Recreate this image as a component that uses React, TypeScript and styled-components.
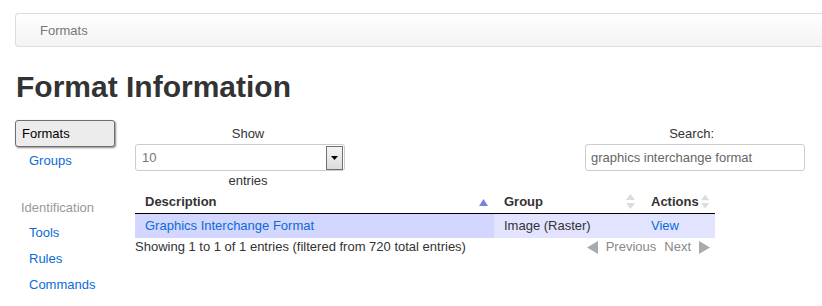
import styled, { createGlobalStyle } from 'styled-components';

const GlobalStyle = createGlobalStyle`
  html, body {
    margin: 0;
    padding: 0;
    background: #fff;
    overflow: hidden;
  }
  body {
    font-family: Arial, "Liberation Sans", sans-serif;
    font-size: 13px;
    color: #333;
  }
`;

type Row = { description: string; group: string };

const rows: Row[] = [{ description: 'Graphics Interchange Format', group: 'Image (Raster)' }];

export default function App() {
  return (
    <>
      <GlobalStyle />
      <Page>
        <Breadcrumb>Formats</Breadcrumb>
        <Title>Format Information</Title>
        <Body>
          <Sidebar>
            <ActiveTab>Formats</ActiveTab>
            <SideLink href="#">Groups</SideLink>
            <SideHeading>Identification</SideHeading>
            <SideLink href="#">Tools</SideLink>
            <SideLink href="#">Rules</SideLink>
            <SideLink href="#">Commands</SideLink>
          </Sidebar>
          <Main>
            <Controls>
              <Length>
                <Label>Show</Label>
                <Select>
                  <SelectValue>10</SelectValue>
                  <SelectButton>
                    <svg width="7" height="4" viewBox="0 0 7 4">
                      <path d="M0 0h7L3.5 4z" fill="#000" />
                    </svg>
                  </SelectButton>
                </Select>
                <Label>entries</Label>
              </Length>
              <Filter>
                <Label>Search:</Label>
                <SearchInput defaultValue="graphics interchange format" />
              </Filter>
            </Controls>
            <Table>
              <colgroup>
                <col style={{ width: 359 }} />
                <col style={{ width: 147 }} />
                <col style={{ width: 74 }} />
              </colgroup>
              <thead>
                <tr>
                  <Th>
                    <ThInner>
                      Description
                      <SortAsc />
                    </ThInner>
                  </Th>
                  <Th>
                    <ThInner>
                      Group
                      <SortBoth />
                    </ThInner>
                  </Th>
                  <Th>
                    <ThInner>
                      Actions
                      <SortBoth />
                    </ThInner>
                  </Th>
                </tr>
              </thead>
              <tbody>
                {rows.map((r) => (
                  <tr key={r.description}>
                    <Td $sorted>
                      <TableLink href="#">{r.description}</TableLink>
                    </Td>
                    <Td>{r.group}</Td>
                    <Td>
                      <TableLink href="#">View</TableLink>
                    </Td>
                  </tr>
                ))}
              </tbody>
            </Table>
            <Footer>
              <span>Showing 1 to 1 of 1 entries (filtered from 720 total entries)</span>
              <Pager>
                <svg width="11" height="13" viewBox="0 0 11 13">
                  <path d="M11 0v13L0 6.5z" fill="#aaa" />
                </svg>
                <PageLabel>Previous</PageLabel>
                <PageLabel>Next</PageLabel>
                <svg width="11" height="13" viewBox="0 0 11 13">
                  <path d="M0 0v13l11-6.5z" fill="#aaa" />
                </svg>
              </Pager>
            </Footer>
          </Main>
        </Body>
      </Page>
    </>
  );
}

function SortAsc() {
  return (
    <svg width="9" height="7" viewBox="0 0 9 7">
      <path d="M4.5 0L9 7H0z" fill="#7f7fe0" />
    </svg>
  );
}

function SortBoth() {
  return (
    <svg width="9" height="16" viewBox="0 0 9 16">
      <path d="M4.5 0L9 6H0z" fill="#dcdcdc" />
      <path d="M0 9h9l-4.5 6z" fill="#dcdcdc" />
    </svg>
  );
}

const Page = styled.div`
  padding-top: 13px;
`;

/* the bar runs on past the right edge of the window, so no right border */
const Breadcrumb = styled.div`
  margin-left: 15px;
  height: 32px;
  line-height: 33px;
  padding-left: 24px;
  border: 1px solid #dcdcdc;
  border-right: none;
  border-radius: 4px 0 0 4px;
  background: linear-gradient(#ffffff, #f3f3f3);
  color: #777;
  font-size: 13px;
`;

const Title = styled.h1`
  margin: 22px 0 0 16px;
  font-size: 30px;
  line-height: 36px;
  font-weight: bold;
  color: #333;
`;

const Body = styled.div`
  display: flex;
  margin-top: 15px;
`;

const Sidebar = styled.nav`
  width: 135px;
  flex-shrink: 0;
  padding-left: 15px;
  box-sizing: border-box;
  display: flex;
  flex-direction: column;
  align-items: flex-start;
`;

const ActiveTab = styled.div`
  box-sizing: border-box;
  width: 100px;
  height: 27px;
  line-height: 25px;
  padding-left: 6px;
  border: 1px solid #6f6f6f;
  border-radius: 3px;
  background: #ececec;
  box-shadow: 1px 1px 2px rgba(0, 0, 0, 0.45);
  color: #000;
`;

const SideLink = styled.a`
  display: block;
  margin-left: 14px;
  line-height: 26px;
  color: #0a6cd6;
  text-decoration: none;
  &:first-of-type {
    margin-top: 1px;
  }
`;

const SideHeading = styled.div`
  margin: 21px 0 0 6px;
  line-height: 25px;
  color: #999;
`;

const Main = styled.main`
  width: 580px;
  padding-top: 6px;
`;

const Controls = styled.div`
  display: flex;
  justify-content: space-between;
`;

const Label = styled.div`
  line-height: 16px;
`;

const Length = styled.div`
  width: 226px;
  display: flex;
  flex-direction: column;
  align-items: center;
  gap: 2px;
`;

const Select = styled.div`
  align-self: flex-start;
  box-sizing: border-box;
  width: 210px;
  height: 27px;
  display: flex;
  align-items: center;
  justify-content: space-between;
  padding: 0 1px 0 6px;
  border: 1px solid #ccc;
  border-radius: 3px;
  background: #fff;
`;

const SelectValue = styled.span`
  color: #777;
`;

const SelectButton = styled.span`
  box-sizing: border-box;
  width: 17px;
  height: 24px;
  display: flex;
  align-items: center;
  justify-content: center;
  border: 1px solid #707070;
  background: linear-gradient(#f4f4f4, #dcdcdc);
`;

const Filter = styled.div`
  display: flex;
  flex-direction: column;
  align-items: flex-end;
  gap: 2px;
  padding-right: 1px;
`;

const SearchInput = styled.input`
  box-sizing: border-box;
  width: 220px;
  height: 27px;
  margin-right: -91px;
  padding: 0 5px;
  border: 1px solid #ccc;
  border-radius: 3px;
  font-family: Arial, "Liberation Sans", sans-serif;
  font-size: 13px;
  color: #666;
  outline: none;
`;

const Table = styled.table`
  width: 580px;
  margin-top: 2px;
  border-collapse: collapse;
  table-layout: fixed;
`;

const Th = styled.th`
  padding: 3px 6px 3px 10px;
  line-height: 16px;
  text-align: left;
  font-weight: bold;
  color: #333;
  border-bottom: 1px solid #000;
`;

const ThInner = styled.div`
  display: flex;
  align-items: center;
  justify-content: space-between;
  gap: 2px;
`;

const Td = styled.td<{ $sorted?: boolean }>`
  padding: 4px 10px;
  line-height: 16px;
  background: ${(p) => (p.$sorted ? '#d3d6ff' : '#e2e4ff')};
  color: #333;
`;

const TableLink = styled.a`
  color: #0a6cd6;
  text-decoration: none;
`;

const Footer = styled.div`
  display: flex;
  justify-content: space-between;
  align-items: center;
  margin-top: 1px;
  line-height: 16px;
`;

const Pager = styled.div`
  display: flex;
  align-items: center;
  gap: 8px;
  padding-right: 5px;
`;

const PageLabel = styled.span`
  color: #888;
`;
